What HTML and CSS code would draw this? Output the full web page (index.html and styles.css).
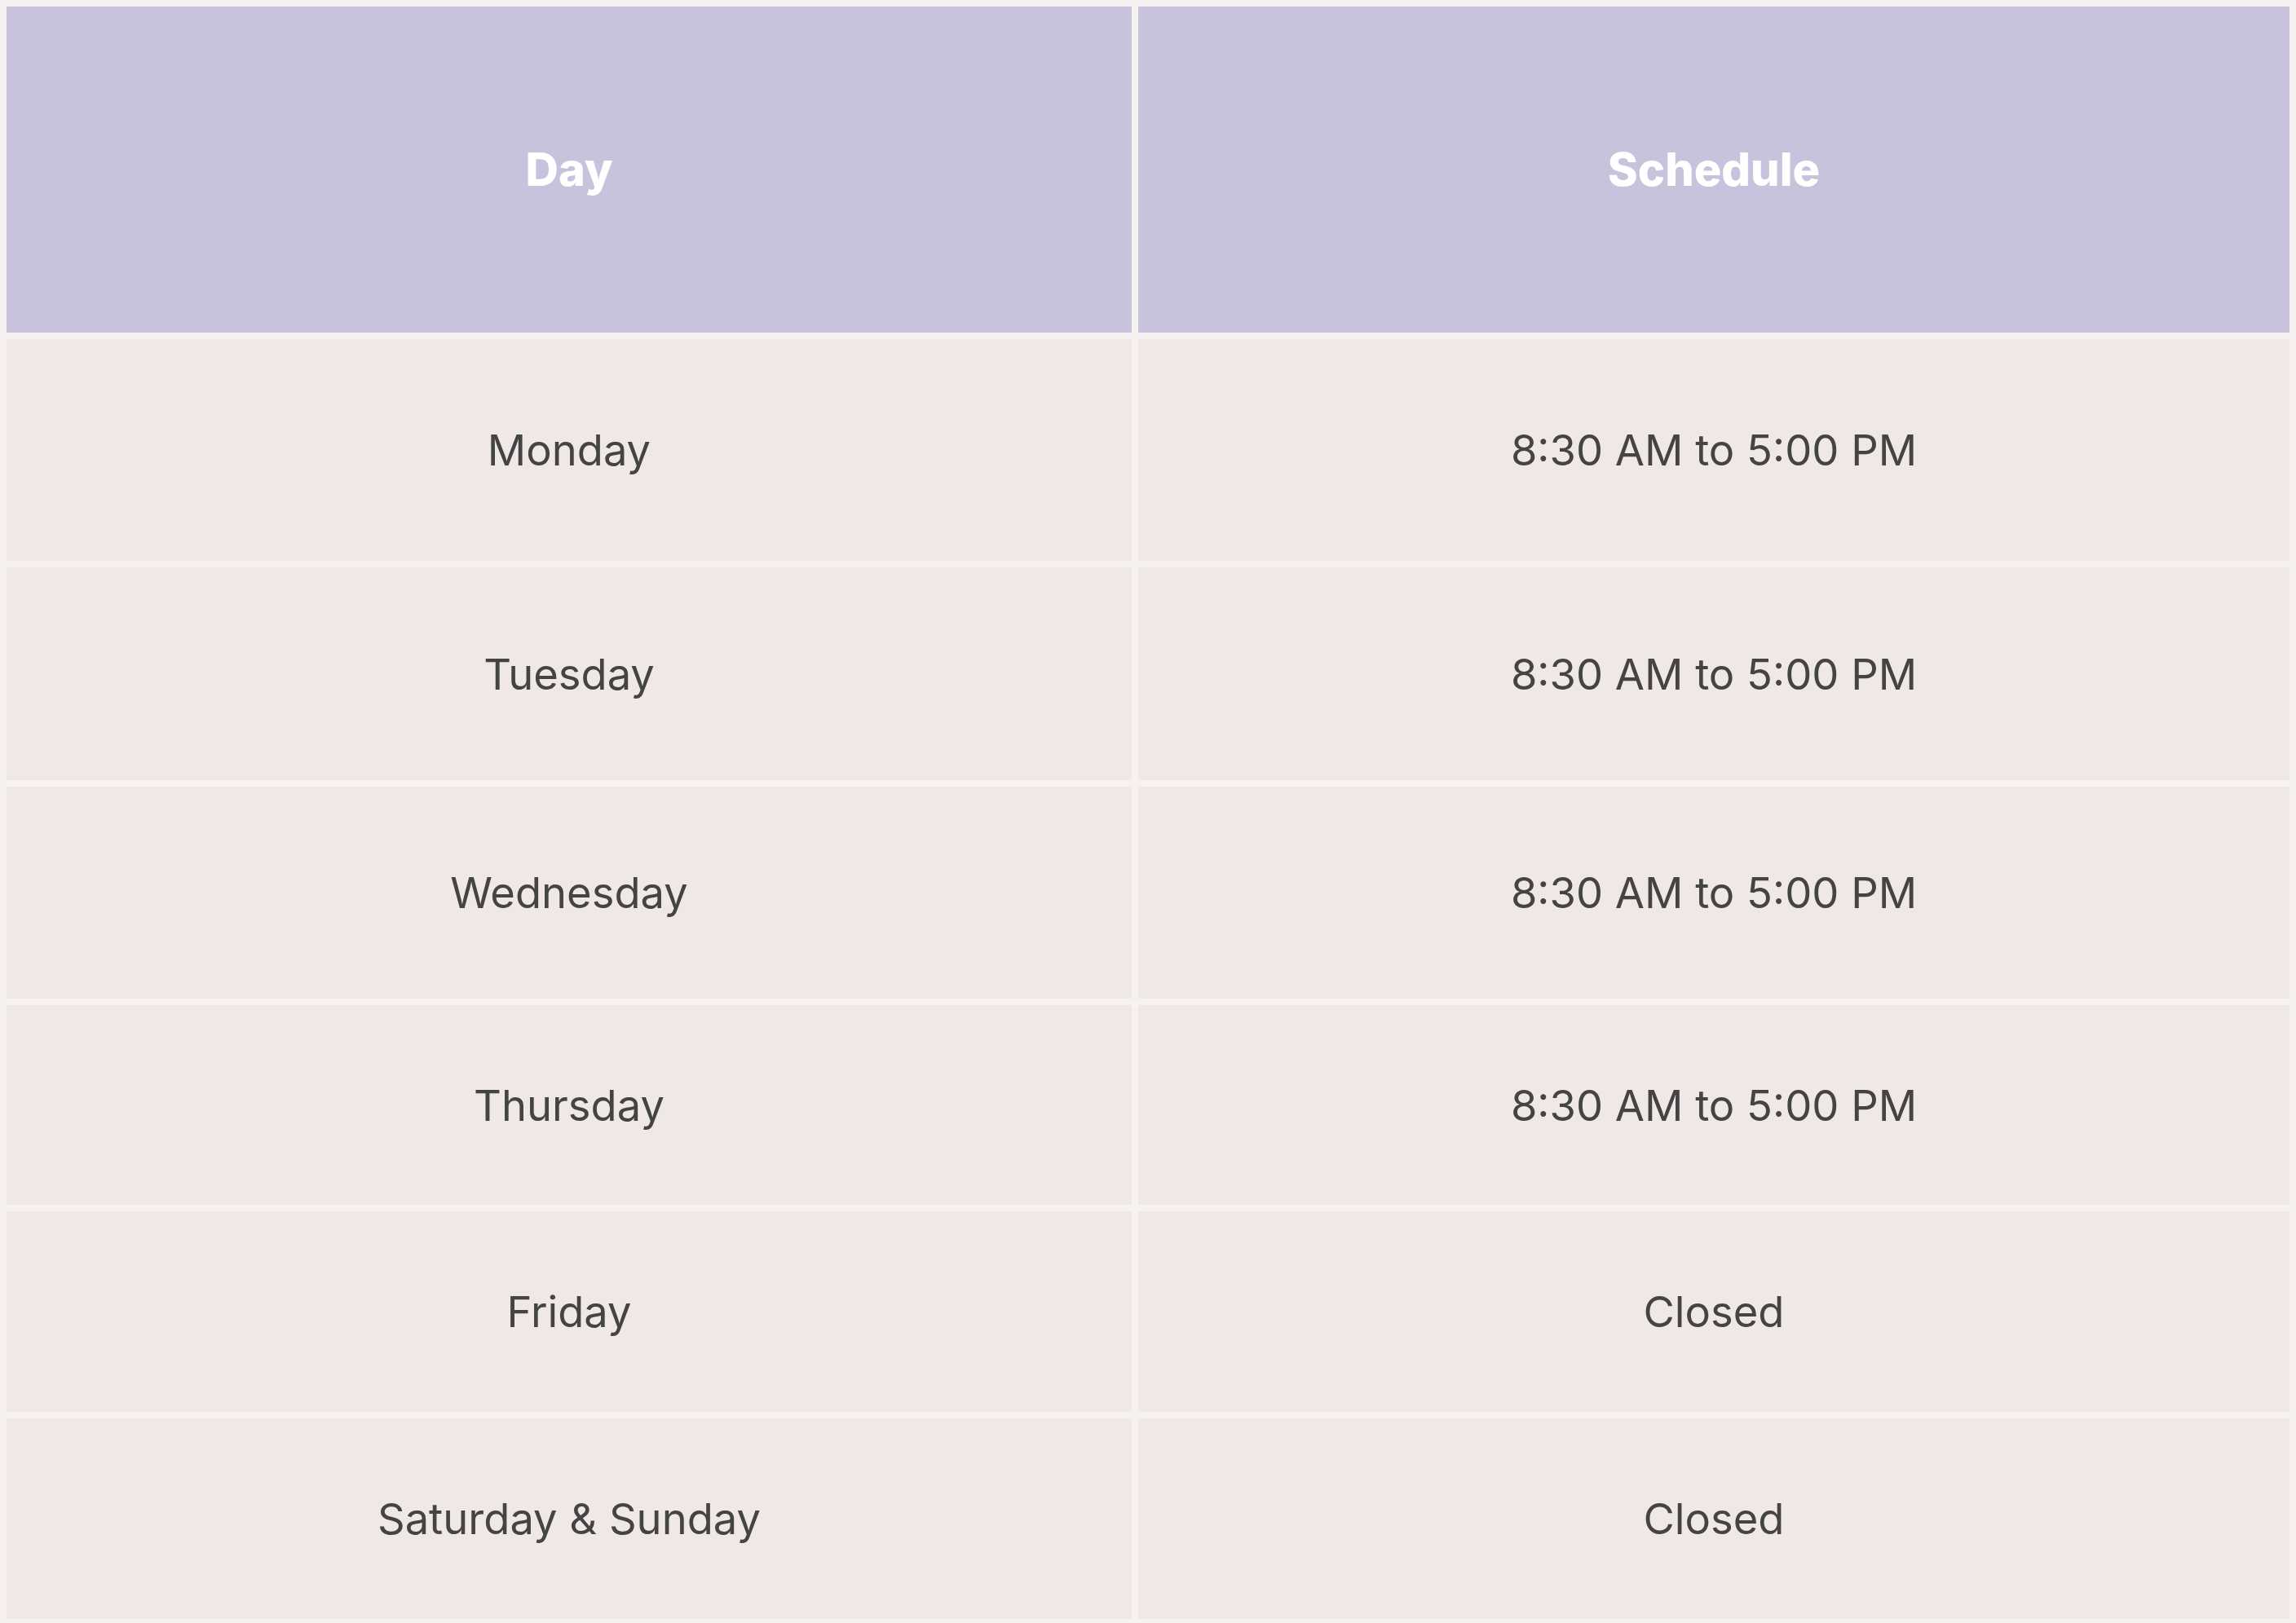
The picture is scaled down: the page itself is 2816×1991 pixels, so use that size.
FILE: index.html
```html
<!DOCTYPE html>
<html lang="en">
<head>
<meta charset="utf-8">
<title>Schedule</title>
<link rel="stylesheet" href="styles.css">
</head>
<body>
<div class="table">
  <div class="cell head">Day</div>
  <div class="cell head">Schedule</div>
  <div class="cell">Monday</div>
  <div class="cell">8:30 AM to 5:00 PM</div>
  <div class="cell">Tuesday</div>
  <div class="cell">8:30 AM to 5:00 PM</div>
  <div class="cell">Wednesday</div>
  <div class="cell">8:30 AM to 5:00 PM</div>
  <div class="cell">Thursday</div>
  <div class="cell">8:30 AM to 5:00 PM</div>
  <div class="cell">Friday</div>
  <div class="cell">Closed</div>
  <div class="cell">Saturday &amp; Sunday</div>
  <div class="cell">Closed</div>
</div>
</body>
</html>
```
FILE: styles.css
```css
html, body {
  margin: 0;
  padding: 0;
  background: #f6f2ef;
}
.table {
  display: grid;
  grid-template-columns: 1380px 1412px;
  grid-template-rows: 400px 272px 261px 260px 245px 246px 246px;
  gap: 8px;
  padding: 8px;
  font-family: Inter, "Noto Sans", sans-serif;
}
.cell {
  display: flex;
  align-items: center;
  justify-content: center;
  background: #f0e8e6;
  color: #444444;
  font-size: 52.5px;
  font-weight: 400;
}
.head {
  background: #c8c3dc;
  color: #ffffff;
  font-weight: 800;
  font-size: 56px;
}
```
